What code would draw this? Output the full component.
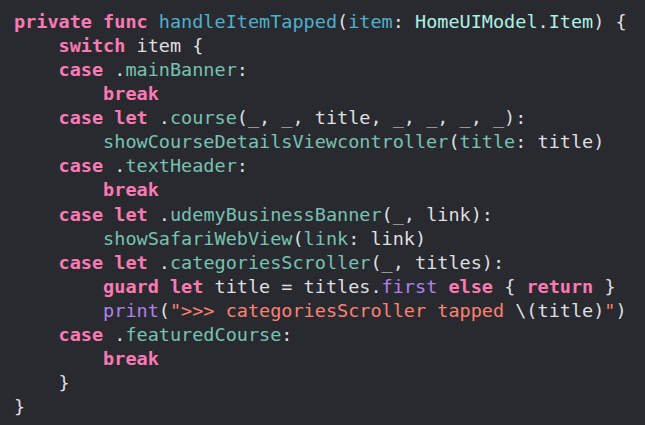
const kw = "text-[#ff7ab2] font-bold";
const plain = "text-[#dfdfe0]";
const decl = "text-[#4eb0cc]";
const type = "text-[#acf2e4]";
const proj = "text-[#78c2b3]";
const other = "text-[#b281eb]";
const str = "text-[#ff8170]";

type Seg = [string, string];

const lines: Seg[][] = [
  [
    [kw, "private"],
    [plain, " "],
    [kw, "func"],
    [plain, " "],
    [decl, "handleItemTapped"],
    [plain, "("],
    [decl, "item"],
    [plain, ": "],
    [type, "HomeUIModel"],
    [plain, "."],
    [type, "Item"],
    [plain, ") {"],
  ],
  [[plain, "    "], [kw, "switch"], [plain, " item {"]],
  [[plain, "    "], [kw, "case"], [plain, " ."], [proj, "mainBanner"], [plain, ":"]],
  [[plain, "        "], [kw, "break"]],
  [
    [plain, "    "],
    [kw, "case"],
    [plain, " "],
    [kw, "let"],
    [plain, " ."],
    [proj, "course"],
    [plain, "(_, _, title, _, _, _, _):"],
  ],
  [
    [plain, "        "],
    [proj, "showCourseDetailsViewcontroller"],
    [plain, "("],
    [proj, "title"],
    [plain, ": title)"],
  ],
  [[plain, "    "], [kw, "case"], [plain, " ."], [proj, "textHeader"], [plain, ":"]],
  [[plain, "        "], [kw, "break"]],
  [
    [plain, "    "],
    [kw, "case"],
    [plain, " "],
    [kw, "let"],
    [plain, " ."],
    [proj, "udemyBusinessBanner"],
    [plain, "(_, link):"],
  ],
  [
    [plain, "        "],
    [proj, "showSafariWebView"],
    [plain, "("],
    [proj, "link"],
    [plain, ": link)"],
  ],
  [
    [plain, "    "],
    [kw, "case"],
    [plain, " "],
    [kw, "let"],
    [plain, " ."],
    [proj, "categoriesScroller"],
    [plain, "(_, titles):"],
  ],
  [
    [plain, "        "],
    [kw, "guard"],
    [plain, " "],
    [kw, "let"],
    [plain, " title = titles."],
    [other, "first"],
    [plain, " "],
    [kw, "else"],
    [plain, " { "],
    [kw, "return"],
    [plain, " }"],
  ],
  [
    [plain, "        "],
    [other, "print"],
    [plain, "("],
    [str, "\">>> categoriesScroller tapped "],
    [plain, "\\(title)"],
    [str, "\""],
    [plain, ")"],
  ],
  [[plain, "    "], [kw, "case"], [plain, " ."], [proj, "featuredCourse"], [plain, ":"]],
  [[plain, "        "], [kw, "break"]],
  [[plain, "    }"]],
  [[plain, "}"]],
];

export default function App() {
  return (
    <div className="w-[645px] h-[425px] overflow-hidden bg-[#292a30] pt-[10px] pl-[14px]">
      <pre className="font-['DejaVu_Sans_Mono',monospace] text-[18.5px] leading-[24.06px] whitespace-pre">
        {lines.map((segs, i) => (
          <div key={i}>
            {segs.map(([cls, text], j) => (
              <span key={j} className={cls}>
                {text}
              </span>
            ))}
          </div>
        ))}
      </pre>
    </div>
  );
}
